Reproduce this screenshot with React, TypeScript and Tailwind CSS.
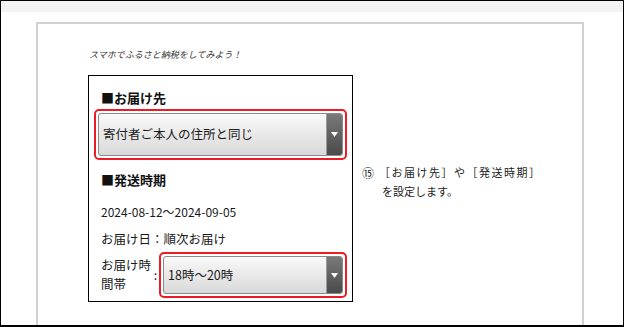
import React from "react";

const jp = { fontFamily: '"Noto Sans CJK JP", "Noto Sans", sans-serif' };

function Select({ label, inner }: { label: string; inner: string }) {
  return (
    <div className="rounded-[5px] border-2 border-[#ec1c24] p-[2px]">
      <div className={`flex ${inner} overflow-hidden rounded-[3px] border border-[#8a8a8a] bg-gradient-to-b from-[#f9f9f9] to-[#d9d9d9]`}>
        <div className="flex flex-1 items-center pl-[4px] text-[12.5px] text-[#1a1a1a]">{label}</div>
        <div className="flex w-[16px] items-center justify-center border-l border-[#9a9a9a] bg-gradient-to-b from-[#7a7a7a] to-[#4a4a4a]">
          <svg width="7" height="5" viewBox="0 0 7 5">
            <polygon points="0,0 7,0 3.5,5" fill="#ffffff" />
          </svg>
        </div>
      </div>
    </div>
  );
}

export default function App() {
  return (
    <div className="flex h-[327px] w-[624px] flex-col border border-b-2 border-black bg-white" style={jp}>
      <div className="h-[11px] bg-[#f3f3f3]" />
      <div className="ml-[35px] mt-[10px] flex w-[548px] flex-1 flex-col border-2 border-b-0 border-[#d2d2d2]">
        <div className="pl-[51px] pt-[25px] text-[9px] italic leading-[12px] text-[#333]">
          スマホでふるさと納税をしてみよう！
        </div>
        <div className="ml-[50px] mt-[14px] flex">
          <div className="h-[227px] w-[265px] border border-black pl-[5px] pt-[14px]">
            <div className="pl-[7px] text-[13px] font-bold leading-[16px] text-[#111]">■お届け先</div>
            <div className="mt-[3px] w-[253px]">
              <Select label="寄付者ご本人の住所と同じ" inner="h-[43px]" />
            </div>
            <div className="mt-[12px] pl-[7px] text-[13px] font-bold leading-[16px] text-[#111]">■発送時期</div>
            <div className="mt-[16px] pl-[7px] text-[12px] leading-[16px] text-[#1a1a1a]">2024-08-12〜2024-09-05</div>
            <div className="mt-[11px] pl-[7px] text-[12.5px] leading-[16px] text-[#1a1a1a]">お届け日：順次お届け</div>
            <div className="mt-[5px] flex">
              <div className="mt-[3px] w-[58px] whitespace-nowrap pl-[7px] text-[12.5px] leading-[19px] text-[#1a1a1a]">
                お届け時
                <br />
                間帯
              </div>
              <div className="flex w-[7px] items-center justify-center text-[12.5px] text-[#1a1a1a]">:</div>
              <div className="w-[188px]">
                <Select label="18時〜20時" inner="h-[38px]" />
              </div>
            </div>
          </div>
          <div className="ml-[9px] mt-[88px] text-[11px] leading-[19px] text-[#222]">
            <div className="flex items-center">
              <span className="w-[17px] text-[12px]">⑮</span>
              <span className="tracking-[1.5px]">［お届け先］や［発送時期］</span>
            </div>
            <div className="pl-[20px]">を設定します。</div>
          </div>
        </div>
      </div>
    </div>
  );
}
